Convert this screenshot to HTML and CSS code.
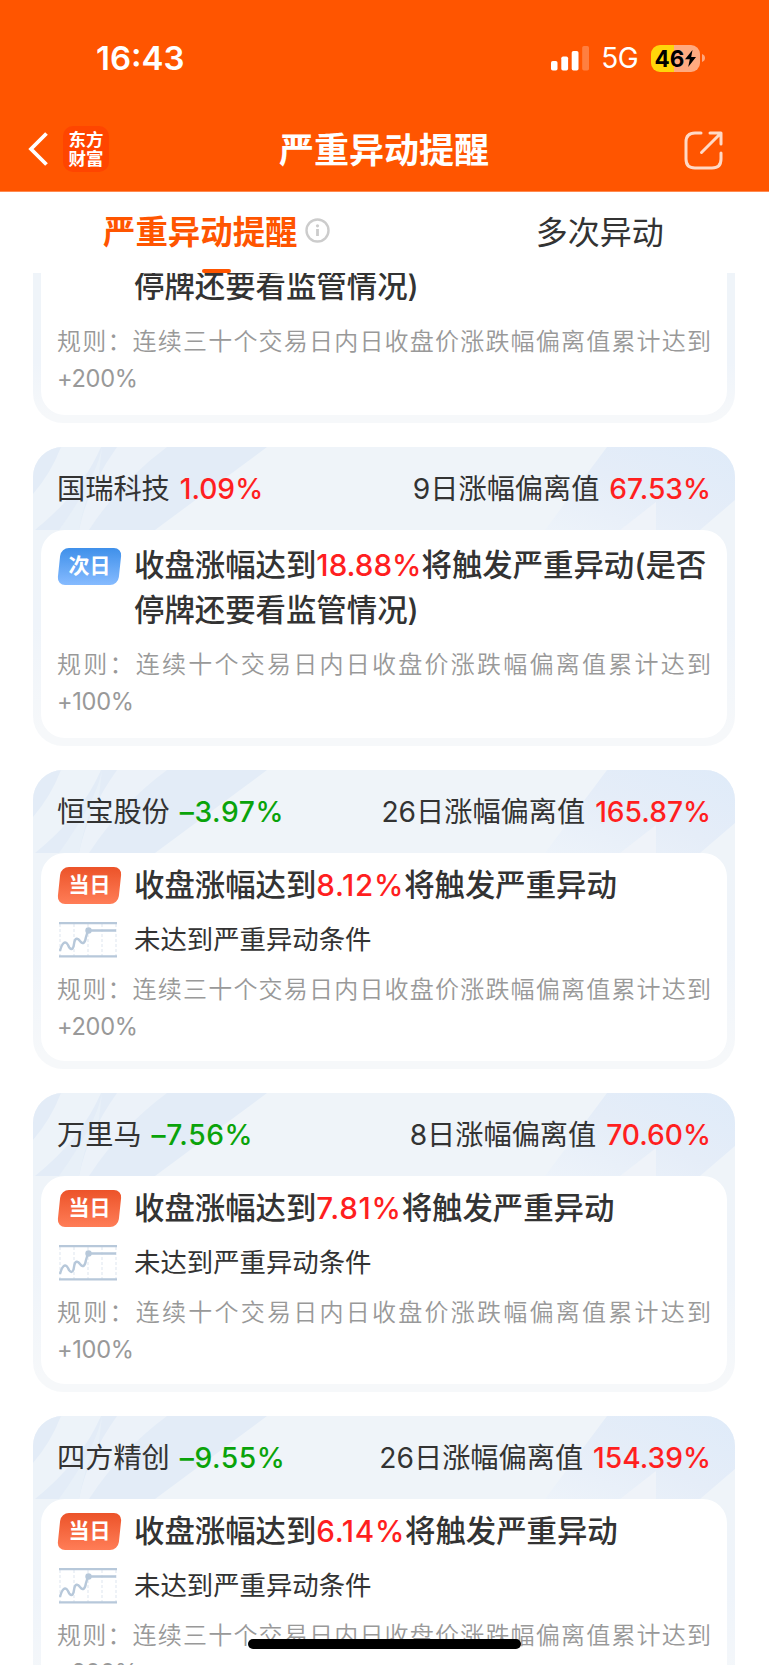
FILE: index.html
```html
<!DOCTYPE html>
<html lang="zh-CN">
<head>
    <meta charset="UTF-8">
    <meta name="viewport" content="width=device-width, initial-scale=1.0">
    <title>严重异动提醒</title>
    <link rel="stylesheet" href="styles.css">
</head>
<body>

<!-- Shared drawings -->
<svg class="defs" width="0" height="0">
    <linearGradient id="blue" x1="0" y1="1" x2="1" y2="0">
        <stop offset="0" stop-color="#edf3fa" />
        <stop offset="0.5" stop-color="#e5edf8" />
        <stop offset="1" stop-color="#dfebf9" />
    </linearGradient>
    <symbol id="card-bg" viewBox="0 0 702 83">
        <path d="M0 0H234L122 83H0Z" fill="#e3ecf7" />
        <path d="M28 0H68Q48 46 2 83H0V47Q18 26 28 0Z" fill="#edf3f9" />
        <path d="M84 0H134Q88 34 56 83H46Q54 42 84 0Z" fill="#ecf2f9" />
        <path d="M69 0Q64 30 26 83H46Q54 42 66 26Z" fill="#e8f0f8" />
        <path d="M574 0H702V53L667 83H512Z" fill="url(#blue)" />
        <path d="M623 55V83H587Z" fill="#eff3f9" />
    </symbol>
    <symbol id="trend" viewBox="0 0 58 36">
        <path d="M1 2V34M15 2V34M29 2V34M43 2V34M57 2V34" stroke="#dde5ef" stroke-width="1" stroke-dasharray="3 2" />
        <path d="M0 1.2H58M0 34.3H58" stroke="#b7c8da" stroke-width="2.2" />
        <path d="M1 29C3 21 6 18 9 23C11 28 14 29 15 22C16 15 19 16 21 19C24 23 26 21 27 15L29 8.5H57" fill="none" stroke="#b7c8da" stroke-width="2.4" />
        <circle cx="29.5" cy="8.5" r="3.2" fill="#b7c8da" />
    </symbol>
</svg>

<header>
    <div class="status-bar">
        <span class="time">16:43</span>
        <div class="status-right">
            <svg class="signal" width="38" height="25" viewBox="0 0 38 25" fill="#fff">
                <rect x="0" y="15" width="6.5" height="9.5" rx="1.8" />
                <rect x="10.3" y="10.5" width="6.8" height="14" rx="1.8" />
                <rect x="20.7" y="5" width="6.8" height="19.5" rx="1.8" />
                <rect x="31.2" y="0" width="6.8" height="24.5" rx="1.8" opacity="0.25" />
            </svg>
            <span class="network">5G</span>
            <div class="battery">
                <span>46</span>
                <svg width="11" height="17" viewBox="0 0 11 17"><path d="M7.5 0L0 9.3H4.8L3.2 17L11 7H6.2Z" /></svg>
            </div>
            <svg class="battery-tip" width="3" height="8" viewBox="0 0 3 8"><path d="M0 0Q3 1.2 3 4T0 8Z" fill="#ffa87f" /></svg>
        </div>
    </div>
    <div class="nav-bar">
        <div class="nav-left">
            <svg width="20" height="34" viewBox="0 0 20 34"><path d="M18.5 1.5L3 17L18.5 32.5" fill="none" stroke="#fff" stroke-width="3.8" /></svg>
            <div class="logo">东方<br>财富</div>
        </div>
        <h1>严重异动提醒</h1>
        <svg class="share" width="40" height="40" viewBox="0 0 40 40" fill="none" stroke="#ffd9c6" stroke-width="3" stroke-linecap="round" stroke-linejoin="round">
            <path d="M17 2H11Q2 2 2 11V28Q2 37 11 37H28Q37 37 37 28V22M26 2H37V13M36 3L17.5 21.5" />
        </svg>
    </div>
</header>

<nav>
    <a class="tab active">严重异动提醒
        <svg width="25" height="25" viewBox="0 0 25 25"><circle cx="12.5" cy="12.5" r="11" fill="none" stroke="#ccc" stroke-width="2.4" /><circle cx="12.5" cy="7.8" r="1.6" fill="#ccc" /><path d="M12.5 11V18" stroke="#ccc" stroke-width="2.8" /></svg>
    </a>
    <a class="tab">多次异动</a>
</nav>

<main>
    <section class="card card-cut">
        <div class="card-body">
            <div class="alert">停牌还要看监管情况)</div>
            <p class="rule">规则：连续三十个交易日内日收盘价涨跌幅偏离值累计达到<span>+200%</span></p>
        </div>
    </section>

    <section class="card">
        <div class="card-head">
            <svg class="card-bg" width="702" height="83"><use href="#card-bg" /></svg>
            <div>国瑞科技 <b class="up">1.09%</b></div>
            <div>9日涨幅偏离值 <b class="up">67.53%</b></div>
        </div>
        <div class="card-body next">
            <div class="row">
                <span class="badge badge-next"><i>次日</i></span>
                <div class="alert">收盘涨幅达到<span class="up">18.88%</span>将触发严重异动(是否停牌还要看监管情况)</div>
            </div>
            <p class="rule">规则：连续十个交易日内日收盘价涨跌幅偏离值累计达到<span>+100%</span></p>
        </div>
    </section>

    <section class="card">
        <div class="card-head">
            <svg class="card-bg" width="702" height="83"><use href="#card-bg" /></svg>
            <div>恒宝股份 <b class="down">–3.97%</b></div>
            <div>26日涨幅偏离值 <b class="up">165.87%</b></div>
        </div>
        <div class="card-body">
            <div class="row">
                <span class="badge"><i>当日</i></span>
                <div class="alert">收盘涨幅达到<span class="up wide">8.12%</span>将触发严重异动</div>
            </div>
            <div class="row state">
                <svg class="trend" width="58" height="36"><use href="#trend" /></svg>
                <div>未达到严重异动条件</div>
            </div>
            <p class="rule">规则：连续三十个交易日内日收盘价涨跌幅偏离值累计达到<span>+200%</span></p>
        </div>
    </section>

    <section class="card">
        <div class="card-head">
            <svg class="card-bg" width="702" height="83"><use href="#card-bg" /></svg>
            <div>万里马 <b class="down">–7.56%</b></div>
            <div>8日涨幅偏离值 <b class="up">70.60%</b></div>
        </div>
        <div class="card-body">
            <div class="row">
                <span class="badge"><i>当日</i></span>
                <div class="alert">收盘涨幅达到<span class="up wide">7.81%</span>将触发严重异动</div>
            </div>
            <div class="row state">
                <svg class="trend" width="58" height="36"><use href="#trend" /></svg>
                <div>未达到严重异动条件</div>
            </div>
            <p class="rule">规则：连续十个交易日内日收盘价涨跌幅偏离值累计达到<span>+100%</span></p>
        </div>
    </section>

    <section class="card">
        <div class="card-head">
            <svg class="card-bg" width="702" height="83"><use href="#card-bg" /></svg>
            <div>四方精创 <b class="down">–9.55%</b></div>
            <div>26日涨幅偏离值 <b class="up">154.39%</b></div>
        </div>
        <div class="card-body">
            <div class="row">
                <span class="badge"><i>当日</i></span>
                <div class="alert">收盘涨幅达到<span class="up wide">6.14%</span>将触发严重异动</div>
            </div>
            <div class="row state">
                <svg class="trend" width="58" height="36"><use href="#trend" /></svg>
                <div>未达到严重异动条件</div>
            </div>
            <p class="rule">规则：连续三十个交易日内日收盘价涨跌幅偏离值累计达到<span>+200%</span></p>
        </div>
    </section>
</main>

<div class="home-indicator"></div>

</body>
</html>
```

FILE: styles.css
```css
* {
    box-sizing: border-box;
}
body {
    margin: 0;
    width: 769px;
    height: 1665px;
    overflow: hidden;
    display: flex;
    flex-direction: column;
    position: relative;
    background-color: #fff;
    color: #333;
    font-family: Inter, "Noto Sans CJK SC", sans-serif;
}
.defs {
    position: absolute;
}
header {
    flex: none;
    height: 192px;
    background-color: #ff5500;
    border-bottom: 1px solid #ff8a50;
    color: #fff;
}

/* Status bar */
.status-bar {
    display: flex;
    justify-content: space-between;
    align-items: center;
    height: 116px;
    padding: 0 64px 0 96px;
}
.time {
    font-size: 33px;
    font-weight: 600;
}
.status-right {
    display: flex;
    align-items: center;
}
.network {
    margin: 0 13px 0 12px;
    font-size: 28px;
    letter-spacing: -0.6px;
}
.battery {
    display: flex;
    align-items: center;
    justify-content: center;
    gap: 1px;
    width: 49px;
    height: 27px;
    border-radius: 9px;
    background: linear-gradient(90deg, #ffd60a 46%, #ffaa80 46%);
    color: #000;
    font-size: 22.5px;
    font-weight: 700;
}
.battery-tip {
    margin-left: 2px;
}

/* Title bar */
.nav-bar {
    display: flex;
    align-items: center;
    justify-content: space-between;
    height: 66px;
    padding: 0 45px 0 28px;
}
.nav-left,
.share {
    flex: none;
}
.nav-left {
    display: flex;
    align-items: center;
    gap: 15px;
    width: 96px;
}
.share {
    margin-top: 4px;
}
.logo {
    width: 46px;
    height: 46px;
    padding-top: 4px;
    border-radius: 10px;
    background-color: #ff4500;
    font-size: 17.5px;
    font-weight: 700;
    line-height: 19px;
    text-align: center;
}
h1 {
    margin: 1px 40px 0 0;
    font-size: 35px;
    font-weight: 600;
    line-height: 64px;
}

/* Tabs */
nav {
    flex: none;
    display: flex;
    height: 81px;
}
.tab {
    display: flex;
    align-items: center;
    justify-content: center;
    position: relative;
    width: 50%;
    height: 81px;
    padding-left: 46px;
    font-size: 32px;
    line-height: 79px;
}
.tab.active {
    gap: 8px;
    padding-left: 49px;
    color: #ff5500;
    font-size: 32.4px;
    font-weight: 600;
}
.tab.active svg {
    margin-top: -4px;
}
.tab.active::after {
    content: "";
    position: absolute;
    left: 202px;
    bottom: 0;
    z-index: 1;
    width: 29px;
    height: 4px;
    border-radius: 2px;
    background-color: #ff5500;
}

/* Card list */
main {
    flex: 1;
    min-height: 0;
    overflow: hidden;
    padding: 0 34px 0 33px;
}
.card {
    display: flex;
    flex-direction: column;
    height: 299px;
    margin-bottom: 24px;
    padding: 0 8px 8px;
    border-radius: 30px;
    overflow: hidden;
    position: relative;
    background: linear-gradient(#eff4f9 30%, #eff4fa 60%, #f6f8fa 95%);
}
.card-cut {
    height: 150px;
    border-radius: 0 0 30px 30px;
}
.card-head {
    display: flex;
    justify-content: space-between;
    align-items: center;
    flex: none;
    height: 83px;
    padding: 0 16px 5px;
    font-size: 28.2px;
}
.card-head > div {
    position: relative;
}
.card-bg {
    position: absolute;
    top: 0;
    left: 0;
}
.card-head b {
    margin-left: 2px;
    font-size: 28.2px;
    font-weight: 500;
}
.up {
    color: #ff1f1f;
}
.down {
    color: #0aa30a;
}
.card-head .down {
    letter-spacing: 0.6px;
}
.card-body {
    flex: 1;
    position: relative;
    padding: 10px 16px 0;
    border-radius: 24px;
    background-color: #fff;
}
.card-cut .card-body {
    padding-top: 0;
    border-radius: 0 0 24px 24px;
}
.card-body.next {
    padding-top: 13px;
}
.row {
    display: flex;
    align-items: flex-start;
    gap: 14px;
}
.badge {
    flex: none;
    width: 61px;
    height: 37px;
    margin: 4px 1px 0 2px;
    border-radius: 8px;
    background: linear-gradient(#ec5329, #ff7d57);
    color: #fff;
    font-size: 21px;
    font-weight: 700;
    line-height: 36px;
    text-align: center;
    transform: skewX(-6deg);
}
.badge-next {
    margin-top: 5px;
    background: linear-gradient(#3f90ea, #86bbff);
}
.badge i {
    display: block;
    font-style: normal;
    transform: skewX(6deg);
}
.alert {
    flex: 1;
    margin-right: -4px;
    margin-left: -1px;
    font-size: 30.4px;
    font-weight: 500;
    line-height: 45px;
}
.alert .up {
    font-size: 29.6px;
    line-height: 1;
}
.alert .wide {
    letter-spacing: 0.7px;
}
.card-cut .alert {
    margin-top: -9px;
    padding-left: 78px;
}
.state {
    gap: 17px;
    height: 42px;
    margin: 14px 0 0;
    font-size: 26.4px;
    line-height: 35px;
}
.state .trend {
    margin: 0 0 0 2px;
}
.rule {
    margin: 14px 0 0;
    color: #999;
    font-size: 24px;
    font-weight: 350;
    line-height: 37px;
    text-align: justify;
}
.next .rule {
    margin-top: 13px;
}
.rule span {
    font-size: 23.6px;
    font-weight: 400;
    letter-spacing: -0.3px;
}
.state + .rule {
    margin-top: 7px;
}

.home-indicator {
    position: absolute;
    left: 248px;
    bottom: 16px;
    width: 273px;
    height: 10px;
    border-radius: 5px;
    background-color: #000;
}
```
